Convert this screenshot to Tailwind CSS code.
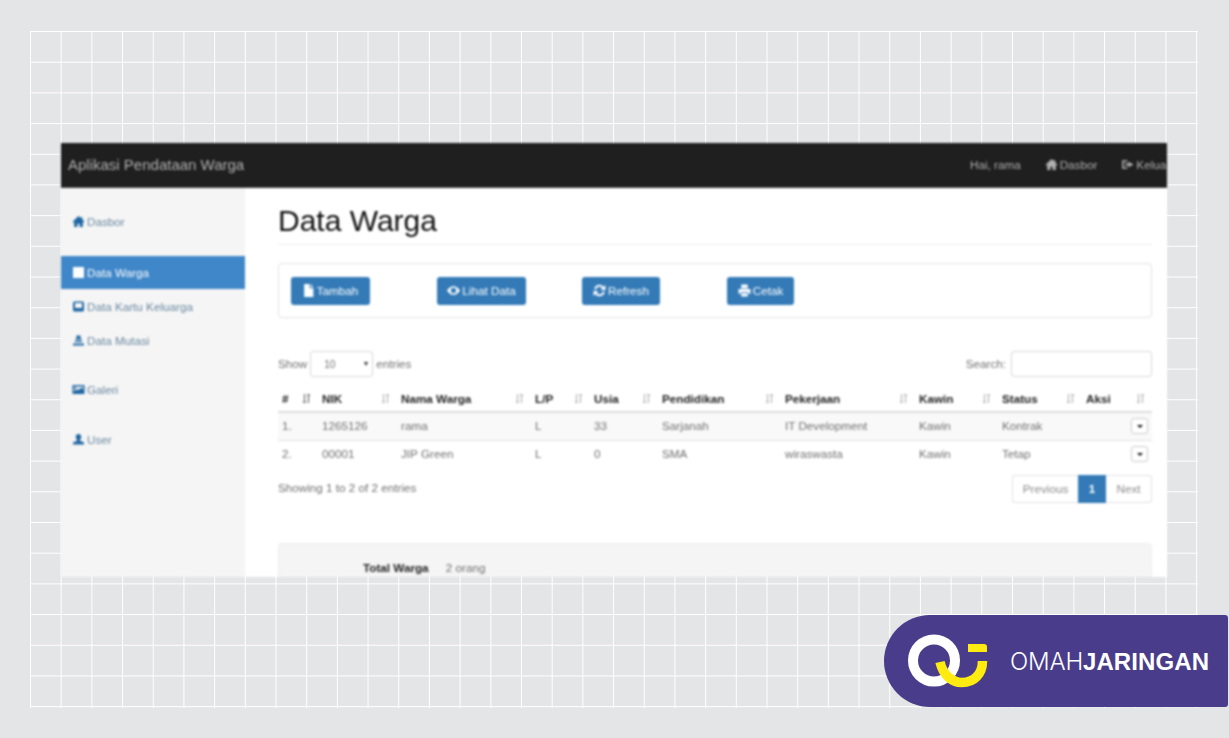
<!DOCTYPE html>
<html lang="en">
<head>
    <meta charset="UTF-8" />
    <meta name="viewport" content="width=device-width, initial-scale=1.0" />
    <title>Aplikasi Pendataan Warga</title>
    <script src="https://cdn.jsdelivr.net/npm/@tailwindcss/browser@4"></script>
</head>
<body class="relative h-[738px] w-[1229px] overflow-hidden bg-[#e4e5e7] font-['Liberation_Sans',Arial,sans-serif]">

    <!-- background grid -->
    <div class="absolute left-[30px] top-[31px] h-[677px] w-[1168px] bg-[linear-gradient(to_right,#fff_1.3px,transparent_1.3px),linear-gradient(to_bottom,#fff_1.3px,transparent_1.3px)] bg-[size:30.7px_30.7px]"></div>

    <!-- app screenshot -->
    <div class="relative ml-[61px] w-[1106px] pt-[143px] blur-[0.8px]">
        <div class="h-[434px] w-[1106px] overflow-hidden bg-white">

            <!-- navbar -->
            <div class="flex h-[45px] items-center border-b border-[#4a4a4a] bg-[#1f1f1f] pl-[7px] text-[#b0b0b0]">
                <span class="text-[15px]">Aplikasi Pendataan Warga</span>
                <div class="ml-auto flex w-[197px] shrink-0 items-center overflow-hidden whitespace-nowrap text-[11.7px]">
                    <span>Hai, rama</span>
                    <span class="ml-[24px] flex items-center gap-[2px]">
                        <svg class="h-[13px] w-[13px] fill-current" viewBox="0 0 12 12"><path d="M6 1 .5 6.200l.8.8L2 6.400V11h3V8h2v3h3V6.400l.7.6.8-.8L9.500 3.900V1.800H8.300v.9z"/></svg>
                        Dasbor
                    </span>
                    <span class="ml-[24px] flex items-center gap-[2px]">
                        <svg class="h-[13px] w-[13px] shrink-0 fill-current" viewBox="0 0 12 12"><path d="M1 2h5v1.500H2.500v5H6V10H1zM7 3.500 11.500 6 7 8.500V7H4V5h3z"/></svg>
                        Keluar
                    </span>
                </div>
            </div>

            <div class="flex h-[389px]">
                <!-- sidebar -->
                <div class="w-[184px] shrink-0 bg-[#f5f5f5] pt-[17px] text-[11.7px] text-[#6a87a1]">
                    <a class="flex h-[33px] items-center gap-[2px] pl-[11px]">
                        <svg class="h-[13px] w-[13px] fill-[#1f66a3]" viewBox="0 0 12 12"><path d="M6 1 .5 6.200l.8.8L2 6.400V11h3V8h2v3h3V6.400l.7.6.8-.8L9.500 3.900V1.800H8.300v.9z"/></svg>
                        Dasbor
                    </a>
                    <a class="mt-[18px] flex h-[33px] items-center gap-[2px] bg-[#3f87c8] pl-[11px] text-white">
                        <svg class="h-[13px] w-[13px] fill-white" viewBox="0 0 13 12"><path d="M1 .5h11v11H1z"/></svg>
                        Data Warga
                    </a>
                    <a class="mt-[1px] flex h-[33px] items-center gap-[2px] pl-[11px]">
                        <svg class="h-[13px] w-[13px] fill-[#1f66a3]" viewBox="0 0 13 12"><path fill-rule="evenodd" d="M2.500 1h8a1.500 1.500 0 0 1 1.500 1.500V9.500A1.500 1.500 0 0 1 10.500 11h-8A1.500 1.500 0 0 1 1 9.500V2.500A1.500 1.500 0 0 1 2.500 1zM3 2.500v5h7v-5z"/></svg>
                        Data Kartu Keluarga
                    </a>
                    <a class="mt-[1px] flex h-[33px] items-center gap-[2px] pl-[11px]">
                        <svg class="h-[13px] w-[13px] fill-[#1f66a3]" viewBox="0 0 13 12"><path d="M4.500 1h4v2.500L10 5H3l1.500-1.500zM3 6h7v1.500H3zM1 9h11v2H1z"/></svg>
                        Data Mutasi
                    </a>
                    <a class="mt-[16px] flex h-[33px] items-center gap-[2px] pl-[11px]">
                        <svg class="h-[13px] w-[13px] fill-[#1f66a3]" viewBox="0 0 13 12"><path fill-rule="evenodd" d="M.500 1.500h12v9H.500zM2 3v5l2.500-2.500L6 7l3-3 2 2V3zM3.500 3.500a1 1 0 1 1 0 2 1 1 0 0 1 0-2z"/></svg>
                        Galeri
                    </a>
                    <a class="mt-[17px] flex h-[33px] items-center gap-[2px] pl-[11px]">
                        <svg class="h-[13px] w-[13px] fill-[#1f66a3]" viewBox="0 0 13 12"><path d="M6.500 .5c1.700 0 2.700 1.300 2.700 3 0 1.200-.5 2.300-1.300 2.900v1c1.800.4 4.100 1 4.100 2.100V11H1V9.500c0-1.100 2.300-1.700 4.100-2.100v-1C4.300 5.800 3.800 4.700 3.800 3.500c0-1.700 1-3 2.700-3z"/></svg>
                        User
                    </a>
                </div>

                <!-- main -->
                <div class="min-w-0 flex-1 pl-[33px] pr-[15px]">
                    <div class="flex h-[57px] items-center border-b border-[#eee] pt-[10px]">
                        <h1 class="text-[30px] leading-none text-[#111]">Data Warga</h1>
                    </div>

                    <!-- toolbar -->
                    <div class="mt-[18px] flex h-[55px] items-center rounded-[4px] border border-[#e2e2e2] pl-[12px] text-[11.7px] text-white">
                        <button class="flex h-[28px] w-[79px] items-center justify-center gap-[3px] rounded-[3px] bg-[#337ab7]">
                            <svg class="h-[13px] w-[11px] fill-white" viewBox="0 0 10 12"><path d="M1 0h5v4h3.500v8H1zM7 0l2.500 3H7z"/></svg>
                            Tambah
                        </button>
                        <button class="ml-[67px] flex h-[28px] w-[89px] items-center justify-center gap-[2px] rounded-[3px] bg-[#337ab7]">
                            <svg class="h-[11px] w-[13px] fill-white" viewBox="0 0 12 10"><path fill-rule="evenodd" d="M6 1c3 0 5 2.500 6 4-1 1.500-3 4-6 4S1 6.500 0 5c1-1.500 3-4 6-4zm0 1.500a2.500 2.500 0 1 0 0 5 2.500 2.500 0 0 0 0-5z"/></svg>
                            Lihat Data
                        </button>
                        <button class="ml-[56px] flex h-[28px] w-[78px] items-center justify-center gap-[2px] rounded-[3px] bg-[#337ab7]">
                            <svg class="h-[13px] w-[13px] fill-none stroke-white stroke-[1.800]" viewBox="0 0 12 12"><path d="M2 5a4 4 0 0 1 7-2l1.500 1.500M10 7a4 4 0 0 1-7 2L1.500 7.500"/><path class="fill-white stroke-none" d="M11.500 1v4.500H7zM.5 11V6.500H5z"/></svg>
                            Refresh
                        </button>
                        <button class="ml-[67px] flex h-[28px] w-[67px] items-center justify-center gap-[2px] rounded-[3px] bg-[#337ab7]">
                            <svg class="h-[13px] w-[13px] fill-white" viewBox="0 0 12 12"><path d="M3 .5h6V4H3zM.5 4.500h11V9H9.500V7.500h-7V9H.5zM3 8.500h6v3H3z"/></svg>
                            Cetak
                        </button>
                    </div>

                    <!-- table controls -->
                    <div class="mt-[33px] flex h-[26px] items-center text-[11.7px] text-[#707070]">
                        <span>Show</span>
                        <div class="ml-[3px] flex h-[26px] w-[63px] items-center rounded-[3px] border border-[#d8d8d8] pl-[13px] pr-[4px] text-[10px]">
                            10
                            <span class="ml-auto h-0 w-0 border-x-[2.500px] border-t-[4px] border-x-transparent border-t-[#333]"></span>
                        </div>
                        <span class="ml-[3px]">entries</span>
                        <span class="ml-auto mr-[5px]">Search:</span>
                        <div class="h-[26px] w-[141px] rounded-[3px] border border-[#d8d8d8]"></div>
                    </div>

                    <!-- table -->
                    <table class="mt-[8px] w-[874px] table-fixed border-collapse text-[11.7px]">
                        <colgroup>
                            <col class="w-[40px]" /><col class="w-[79px]" /><col class="w-[134px]" /><col class="w-[59px]" /><col class="w-[68px]" /><col class="w-[123px]" /><col class="w-[134px]" /><col class="w-[83px]" /><col class="w-[84px]" /><col class="w-[70px]" />
                        </colgroup>
                        <thead>
                            <tr class="h-[27px] border-b-2 border-[#ddd] text-left font-bold text-[#222]">
                                <th class="pl-[4px] pt-[2px]"><div class="flex items-center justify-between pr-[7px]">#<svg class="h-[11px] w-[9px] stroke-[#555]" viewBox="0 0 9 11" fill="none"><path d="M2.500 1v9M1 8.500 2.500 10 4 8.500M6.500 10V1M5 2.500 6.500 1 8 2.500"/></svg></div></th>
                                <th class="pl-[4px] pt-[2px]"><div class="flex items-center justify-between pr-[7px]">NIK<svg class="h-[11px] w-[9px] stroke-[#aaa]" viewBox="0 0 9 11" fill="none"><path d="M2.500 1v9M1 8.500 2.500 10 4 8.500M6.500 10V1M5 2.500 6.500 1 8 2.500"/></svg></div></th>
                                <th class="pl-[4px] pt-[2px]"><div class="flex items-center justify-between pr-[7px]">Nama Warga<svg class="h-[11px] w-[9px] stroke-[#aaa]" viewBox="0 0 9 11" fill="none"><path d="M2.500 1v9M1 8.500 2.500 10 4 8.500M6.500 10V1M5 2.500 6.500 1 8 2.500"/></svg></div></th>
                                <th class="pl-[4px] pt-[2px]"><div class="flex items-center justify-between pr-[7px]">L/P<svg class="h-[11px] w-[9px] stroke-[#aaa]" viewBox="0 0 9 11" fill="none"><path d="M2.500 1v9M1 8.500 2.500 10 4 8.500M6.500 10V1M5 2.500 6.500 1 8 2.500"/></svg></div></th>
                                <th class="pl-[4px] pt-[2px]"><div class="flex items-center justify-between pr-[7px]">Usia<svg class="h-[11px] w-[9px] stroke-[#aaa]" viewBox="0 0 9 11" fill="none"><path d="M2.500 1v9M1 8.500 2.500 10 4 8.500M6.500 10V1M5 2.500 6.500 1 8 2.500"/></svg></div></th>
                                <th class="pl-[4px] pt-[2px]"><div class="flex items-center justify-between pr-[7px]">Pendidikan<svg class="h-[11px] w-[9px] stroke-[#aaa]" viewBox="0 0 9 11" fill="none"><path d="M2.500 1v9M1 8.500 2.500 10 4 8.500M6.500 10V1M5 2.500 6.500 1 8 2.500"/></svg></div></th>
                                <th class="pl-[4px] pt-[2px]"><div class="flex items-center justify-between pr-[7px]">Pekerjaan<svg class="h-[11px] w-[9px] stroke-[#aaa]" viewBox="0 0 9 11" fill="none"><path d="M2.500 1v9M1 8.500 2.500 10 4 8.500M6.500 10V1M5 2.500 6.500 1 8 2.500"/></svg></div></th>
                                <th class="pl-[4px] pt-[2px]"><div class="flex items-center justify-between pr-[7px]">Kawin<svg class="h-[11px] w-[9px] stroke-[#aaa]" viewBox="0 0 9 11" fill="none"><path d="M2.500 1v9M1 8.500 2.500 10 4 8.500M6.500 10V1M5 2.500 6.500 1 8 2.500"/></svg></div></th>
                                <th class="pl-[4px] pt-[2px]"><div class="flex items-center justify-between pr-[7px]">Status<svg class="h-[11px] w-[9px] stroke-[#aaa]" viewBox="0 0 9 11" fill="none"><path d="M2.500 1v9M1 8.500 2.500 10 4 8.500M6.500 10V1M5 2.500 6.500 1 8 2.500"/></svg></div></th>
                                <th class="pl-[4px] pt-[2px]"><div class="flex items-center justify-between pr-[7px]">Aksi<svg class="h-[11px] w-[9px] stroke-[#aaa]" viewBox="0 0 9 11" fill="none"><path d="M2.500 1v9M1 8.500 2.500 10 4 8.500M6.500 10V1M5 2.500 6.500 1 8 2.500"/></svg></div></th>
                            </tr>
                        </thead>
                        <tbody class="text-[#707070]">
                            <tr class="h-[28px] bg-[#f9f9f9]">
                                <td class="pl-[4px]">1.</td><td class="pl-[4px]">1265126</td><td class="pl-[4px]">rama</td><td class="pl-[4px]">L</td><td class="pl-[4px]">33</td><td class="pl-[4px]">Sarjanah</td><td class="pl-[4px]">IT Development</td><td class="pl-[4px]">Kawin</td><td class="pl-[4px]">Kontrak</td>
                                <td class="pr-[4px]"><div class="ml-auto flex h-[16px] w-[17px] items-center justify-center rounded-[3px] border border-[#ccc] bg-white"><span class="h-0 w-0 border-x-[3px] border-t-[3px] border-x-transparent border-t-[#111]"></span></div></td>
                            </tr>
                            <tr class="h-[28px] border-t border-[#e2e2e2]">
                                <td class="pl-[4px]">2.</td><td class="pl-[4px]">00001</td><td class="pl-[4px]">JIP Green</td><td class="pl-[4px]">L</td><td class="pl-[4px]">0</td><td class="pl-[4px]">SMA</td><td class="pl-[4px]">wiraswasta</td><td class="pl-[4px]">Kawin</td><td class="pl-[4px]">Tetap</td>
                                <td class="pr-[4px]"><div class="ml-auto flex h-[16px] w-[17px] items-center justify-center rounded-[3px] border border-[#ccc] bg-white"><span class="h-0 w-0 border-x-[3px] border-t-[3px] border-x-transparent border-t-[#111]"></span></div></td>
                            </tr>
                        </tbody>
                    </table>

                    <!-- table footer -->
                    <div class="mt-[7px] flex h-[28px] items-center text-[11.7px] text-[#707070]">
                        <span class="-mt-[2px]">Showing 1 to 2 of 2 entries</span>
                        <div class="ml-auto flex h-[28px] items-stretch">
                            <span class="flex w-[66px] items-center justify-center rounded-l-[3px] border border-r-0 border-[#e2e2e2] text-[#8c8c8c]">Previous</span>
                            <span class="flex w-[28px] items-center justify-center bg-[#337ab7] font-bold text-white">1</span>
                            <span class="flex w-[46px] items-center justify-center rounded-r-[3px] border border-l-0 border-[#e2e2e2] text-[#8c8c8c]">Next</span>
                        </div>
                    </div>

                    <!-- summary -->
                    <div class="mt-[40px] h-[80px] rounded-[4px] border border-[#eee] bg-[#f5f5f5] pl-[84px] pt-[15px] text-[11.7px]">
                        <span class="font-bold text-[#222]">Total Warga</span>
                        <span class="ml-[14px] text-[#707070]">2 orang</span>
                    </div>
                </div>
            </div>
        </div>
    </div>

    <!-- brand badge -->
    <div class="absolute left-[884px] top-[615px] flex h-[92px] w-[344px] items-center rounded-l-[46px] rounded-r-[3px] bg-[#483c8b]">
        <svg class="ml-[22px] h-[60px] w-[84px] shrink-0" viewBox="0 0 84 60" fill="none">
            <circle cx="28" cy="29.500" r="21" stroke="#fff" stroke-width="10" />
            <path d="M34 31C37 44 46 51.500 56 51.500 68 51.500 76.500 43 76.500 30" stroke="#ffeb0f" stroke-width="9.500" />
            <path d="M62 13h16a3 3 0 0 1 3 3v5H62z" fill="#ffeb0f" />
        </svg>
        <span class="ml-[20px] mt-[2px] text-[24px] tracking-[0.1px] text-white"><span class="font-['Inter'] font-light tracking-[-0.2px]">OMAH</span><span class="font-bold">JARINGAN</span></span>
    </div>

</body>
</html>
